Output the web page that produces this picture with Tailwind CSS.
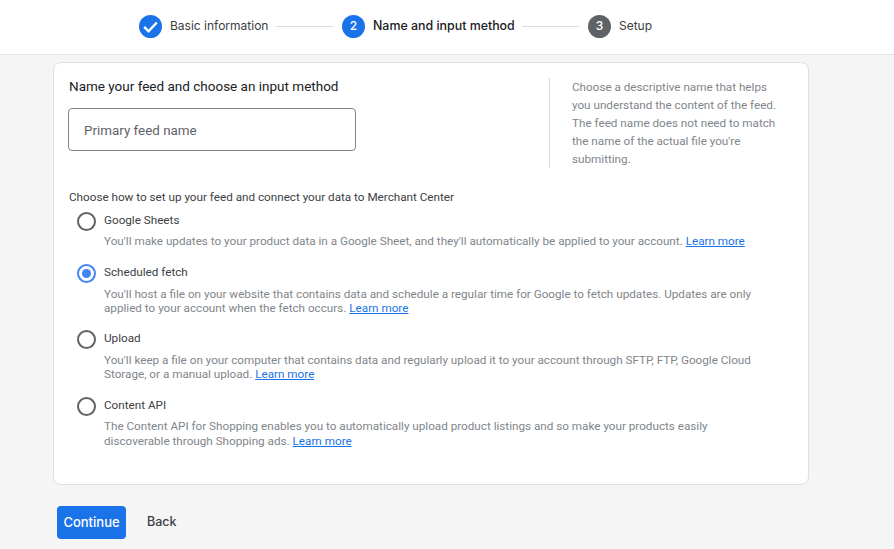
<!DOCTYPE html>
<html lang="en">
<head>
    <meta charset="UTF-8">
    <meta name="viewport" content="width=device-width, initial-scale=1.0">
    <title>Name and input method</title>
    <script src="https://cdn.jsdelivr.net/npm/@tailwindcss/browser@4"></script>
</head>
<body class="bg-[#f5f5f5] h-[549px] overflow-hidden font-['Roboto',sans-serif]">
    <!-- Stepper -->
    <header class="h-[55px] bg-white border-b border-[#e3e3e3] flex items-center pl-[139px] pb-[2px] text-xs font-['Inter',sans-serif]">
        <span class="w-[23px] h-[23px] rounded-full bg-[#1a73e8] flex items-center justify-center">
            <svg width="19" height="19" viewBox="0 0 24 24" fill="none" stroke="#fff" stroke-width="3"><path d="M4 12.5l5.5 5.5L20 7"/></svg>
        </span>
        <span class="ml-[8px] w-[99px] text-[#3c4043] whitespace-nowrap">Basic information</span>
        <span class="ml-[7px] w-[57px] h-px bg-[#dadce0]"></span>
        <span class="ml-[9px] w-[23px] h-[23px] rounded-full bg-[#1a73e8] text-white text-xs font-medium flex items-center justify-center">2</span>
        <span class="ml-[8px] w-[142px] text-[12.4px] text-[#202124] font-medium whitespace-nowrap">Name and input method</span>
        <span class="ml-[7px] w-[57px] h-px bg-[#dadce0]"></span>
        <span class="ml-[9px] w-[23px] h-[23px] rounded-full bg-[#5f6368] text-white text-xs font-medium flex items-center justify-center">3</span>
        <span class="ml-[8px] text-[#3c4043]">Setup</span>
    </header>

    <main class="pl-[53px] pt-[7px]">
        <section class="w-[756px] h-[423px] bg-white border border-[#e0e0e0] rounded-lg px-[15px] pt-[14px]">
            <div class="flex">
                <div class="w-[480px]">
                    <h2 class="text-[13.5px] leading-[18px] text-[#202124]">Name your feed and choose an input method</h2>
                    <div class="mt-[13px] w-[288px] h-[43px] -ml-px border border-[#80868b] rounded flex items-center pl-[15px] pt-[3px] text-[13.4px] text-[#5f6368]">Primary feed name</div>
                </div>
                <div class="w-[235px] h-[90px] mt-px border-l border-[#dadce0] pl-[22px] text-[11.7px] leading-[18px] text-[#80868b]">
                    Choose a descriptive name that helps you understand the content of the feed. The feed name does not need to match the name of the actual file you're submitting.
                </div>
            </div>

            <p class="mt-[21px] text-[11.7px] leading-[16px] text-[#3c4043]">Choose how to set up your feed and connect your data to Merchant Center</p>

            <div class="mt-[7px] ml-[8px] flex flex-col text-[11.7px]">
                <div class="flex">
                    <span class="w-[19px] h-[19px] rounded-full border-2 border-[#5f6368] shrink-0"></span>
                    <div class="ml-[8px]">
                        <div class="leading-[16px] text-[#3c4043]">Google Sheets</div>
                        <p class="mt-[6px] leading-[14px] text-[#80868b]">You'll make updates to your product data in a Google Sheet, and they'll automatically be applied to your account. <a class="text-[#1a73e8] underline">Learn more</a></p>
                    </div>
                </div>
                <div class="flex mt-[16px]">
                    <span class="w-[19px] h-[19px] rounded-full border-2 border-[#4285f4] shrink-0 flex items-center justify-center"><span class="w-[9px] h-[9px] rounded-full bg-[#4285f4]"></span></span>
                    <div class="ml-[8px]">
                        <div class="leading-[16px] text-[#3c4043]">Scheduled fetch</div>
                        <p class="mt-[7px] w-[660px] leading-[14px] text-[#80868b]">You'll host a file on your website that contains data and schedule a regular time for Google to fetch updates. Updates are only applied to your account when the fetch occurs. <a class="text-[#1a73e8] underline">Learn more</a></p>
                    </div>
                </div>
                <div class="flex mt-[15px]">
                    <span class="w-[19px] h-[19px] rounded-full border-2 border-[#5f6368] shrink-0"></span>
                    <div class="ml-[8px]">
                        <div class="leading-[16px] text-[#3c4043]">Upload</div>
                        <p class="mt-[7px] w-[660px] leading-[14px] text-[#80868b]">You'll keep a file on your computer that contains data and regularly upload it to your account through SFTP, FTP, Google Cloud Storage, or a manual upload. <a class="text-[#1a73e8] underline">Learn more</a></p>
                    </div>
                </div>
                <div class="flex mt-[16px]">
                    <span class="w-[19px] h-[19px] rounded-full border-2 border-[#5f6368] shrink-0"></span>
                    <div class="ml-[8px]">
                        <div class="leading-[16px] text-[#3c4043]">Content API</div>
                        <p class="mt-[6px] w-[660px] leading-[15px] text-[#80868b]">The Content API for Shopping enables you to automatically upload product listings and so make your products easily discoverable through Shopping ads. <a class="text-[#1a73e8] underline">Learn more</a></p>
                    </div>
                </div>
            </div>
        </section>

        <div class="mt-[21px] ml-[4px] flex items-center">
            <button class="w-[69px] h-[33px] bg-[#1a73e8] rounded text-white text-[13px] font-medium font-['Inter',sans-serif]">Continue</button>
            <button class="ml-[21px] text-[12.5px] font-medium text-[#3c4043] font-['Inter',sans-serif]">Back</button>
        </div>
    </main>
</body>
</html>
